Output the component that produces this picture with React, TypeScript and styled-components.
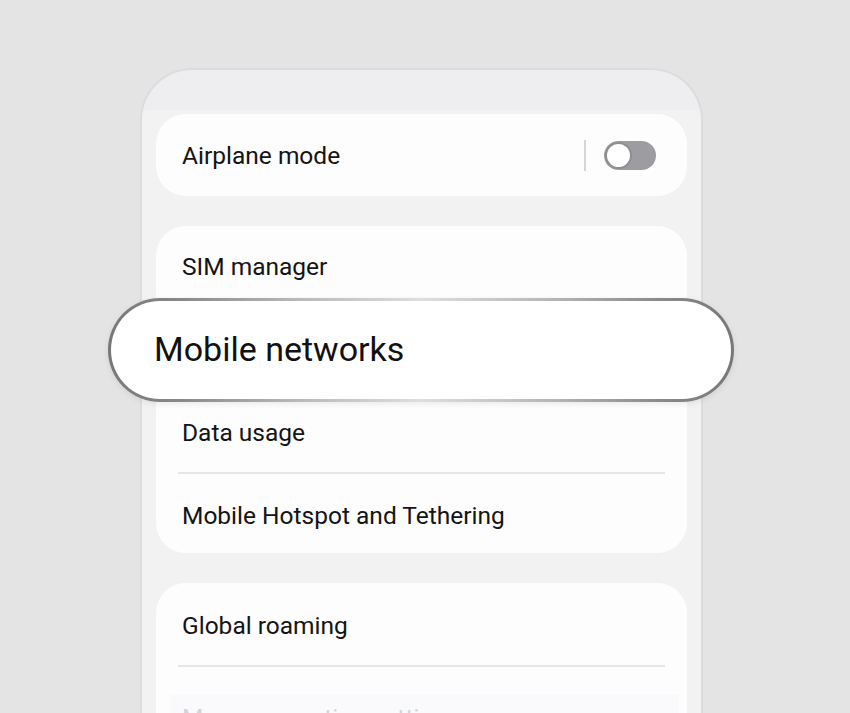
import styled, { createGlobalStyle } from "styled-components";

const GlobalStyle = createGlobalStyle`
  html, body {
    margin: 0;
    padding: 0;
    background: #e4e4e4;
    font-family: Roboto, "Noto Sans", "Liberation Sans", sans-serif;
    overflow: hidden;
  }
`;

const Stage = styled.div`
  width: 850px;
  height: 713px;
  overflow: hidden;
  padding-top: 68px;
  box-sizing: border-box;
`;

const Phone = styled.div`
  margin-left: 140px;
  width: 563px;
  height: 700px;
  box-sizing: border-box;
  border: 2px solid #dcdcde;
  border-bottom: none;
  border-radius: 52px 52px 0 0;
  background: linear-gradient(#eeeef0 0, #eeeef0 40px, #f2f2f3 41px);
  padding: 44px 14px 0;
  display: flex;
  flex-direction: column;
  gap: 30px;
`;

const Card = styled.div`
  background: #fdfdfe;
  border-radius: 30px;
  display: flex;
  flex-direction: column;
`;

const Label = styled.span<{ faded?: boolean }>`
  font-size: 24.5px;
  color: ${(p) => (p.faded ? "#d4d4d8" : "#141414")};
`;

const Row = styled.div<{ h: number; top: number }>`
  height: ${(p) => p.h}px;
  box-sizing: border-box;
  padding: ${(p) => p.top}px 26px 0;
  display: flex;
  align-items: flex-start;
  line-height: 28px;
`;

// the next item, fading out below the screen edge
const FadeRow = styled(Row)`
  margin: 28px 8px 0 14px;
  padding-left: 12px;
  background: #fafafc;
`;

const ToggleRow = styled.div`
  height: 82px;
  padding: 0 31px 0 26px;
  display: flex;
  align-items: center;
`;

const Spacer = styled.div`
  flex: 1;
`;

const VLine = styled.div`
  width: 2px;
  height: 31px;
  background: #d6d6d8;
  margin-right: 18px;
`;

const Switch = styled.div`
  width: 52px;
  height: 29px;
  border-radius: 15px;
  background: #9d9da1;
  position: relative;
`;

const Knob = styled.div`
  position: absolute;
  left: 1px;
  top: 1px;
  width: 23px;
  height: 23px;
  border-radius: 50%;
  background: #fff;
  border: 2px solid #8e8e92;
`;

const Divider = styled.div`
  height: 2px;
  margin: 0 22px;
  background: #e6e6e8;
`;

const Highlight = styled.div`
  margin: 0 -47px 0 -48px;
  height: 104px;
  box-sizing: border-box;
  border-radius: 52px;
  border: 3px solid transparent;
  background:
    linear-gradient(#fff, #fff) padding-box,
    linear-gradient(90deg, #777 0%, #8a8a8a 12%, #b8b8b8 30%, #dedede 50%, #b8b8b8 70%, #8a8a8a 88%, #777 100%) border-box;
  box-shadow: 0 2px 6px rgba(0, 0, 0, 0.08);
  display: flex;
  align-items: center;
  padding-left: 43px;
  padding-bottom: 2px;
  position: relative;
  z-index: 1;
`;

const BigLabel = styled.span`
  font-size: 34px;
  color: #111;
`;

export default function App() {
  return (
    <Stage>
      <GlobalStyle />
      <Phone>
        <Card>
          <ToggleRow>
            <Label>Airplane mode</Label>
            <Spacer />
            <VLine />
            <Switch>
              <Knob />
            </Switch>
          </ToggleRow>
        </Card>
        <Card>
          <Row h={72} top={27}>
            <Label>SIM manager</Label>
          </Row>
          <Highlight>
            <BigLabel>Mobile networks</BigLabel>
          </Highlight>
          <Row h={70} top={17}>
            <Label>Data usage</Label>
          </Row>
          <Divider />
          <Row h={79} top={28}>
            <Label>Mobile Hotspot and Tethering</Label>
          </Row>
        </Card>
        <Card>
          <Row h={82} top={29}>
            <Label>Global roaming</Label>
          </Row>
          <Divider />
          <FadeRow h={60} top={9}>
            <Label faded>More connection settings</Label>
          </FadeRow>
        </Card>
      </Phone>
    </Stage>
  );
}
